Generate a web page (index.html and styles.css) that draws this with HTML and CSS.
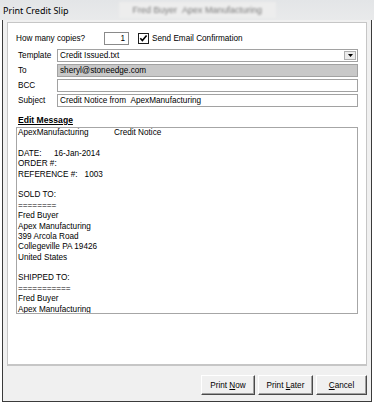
FILE: index.html
```html
<!DOCTYPE html>
<html>
<head>
<meta charset="utf-8">
<link rel="stylesheet" href="styles.css">
</head>
<body>
<div class="screen">
  <div class="titlebar">
    <span class="title">Print Credit Slip</span>
    <span class="ghost">Fred Buyer &nbsp;Apex Manufacturing</span>
  </div>
  <div class="frame">
    <div class="panel">
      <div class="row-copies">
        <span class="lbl-copies">How many copies?</span>
        <span class="num">1</span>
        <span class="chk"><svg width="11" height="11" viewBox="0 0 11 11"><rect x="0.5" y="0.5" width="10" height="10" fill="#fff" stroke="#1e1e1e"/><polyline points="2.3,5.2 4.4,7.6 8.6,2.6" fill="none" stroke="#000" stroke-width="1.6"/></svg></span>
        <span>Send Email Confirmation</span>
      </div>
      <div class="fields">
        <div class="frow"><span class="flabel">Template</span><div class="input select"><span>Credit Issued.txt</span><span class="arrow"><svg width="5" height="3" viewBox="0 0 5 3"><polygon points="0,0 5,0 2.5,3" fill="#000"/></svg></span></div></div>
        <div class="frow"><span class="flabel">To</span><div class="input grey"><span>sheryl@stoneedge.com</span></div></div>
        <div class="frow"><span class="flabel">BCC</span><div class="input"></div></div>
        <div class="frow"><span class="flabel">Subject</span><div class="input"><span>Credit Notice from &nbsp;ApexManufacturing</span></div></div>
      </div>
      <div class="edit-label">Edit Message</div>
      <div class="message">
        <div class="ln"><span class="c96">ApexManufacturing</span>Credit Notice</div>
        <div class="ln">&nbsp;</div>
        <div class="ln"><span class="c36">DATE:</span>16-Jan-2014</div>
        <div class="ln">ORDER #:</div>
        <div class="ln"><span class="cref">REFERENCE #:</span>1003</div>
        <div class="ln">&nbsp;</div>
        <div class="ln">SOLD TO:</div>
        <div class="ln">========</div>
        <div class="ln">Fred Buyer</div>
        <div class="ln">Apex Manufacturing</div>
        <div class="ln">399 Arcola Road</div>
        <div class="ln">Collegeville PA 19426</div>
        <div class="ln">United States</div>
        <div class="ln">&nbsp;</div>
        <div class="ln">SHIPPED TO:</div>
        <div class="ln">===========</div>
        <div class="ln">Fred Buyer</div>
        <div class="ln">Apex Manufacturing</div>
      </div>
    </div>
    <div class="buttons">
      <button class="btn w54">Print <u>N</u>ow</button>
      <button class="btn w55">Print <u>L</u>ater</button>
      <button class="btn w51"><u>C</u>ancel</button>
    </div>
  </div>
</div>
</body>
</html>
```
FILE: styles.css
```css
* { box-sizing: border-box; }
body {
  margin: 0;
  width: 374px;
  height: 404px;
  overflow: hidden;
  background: #ffffff;
  font-family: "Liberation Sans", Arial, sans-serif;
  font-size: 8.2px;
  color: #000;
}
.screen {
  height: 404px;
  display: flex;
  flex-direction: column;
}
.titlebar {
  height: 20px;
  flex: none;
  display: flex;
  align-items: center;
  padding-left: 3px;
  background: linear-gradient(#e3e5e7, #e9eaeb);
}
.title {
  font-family: "Noto Sans", sans-serif;
  font-size: 9px;
  color: #000;
}
.ghost {
  margin-left: 50px;
  padding: 3px 14px;
  font-size: 9px;
  color: #7a7a7a;
  background: #ededed;
  filter: blur(1.1px);
}
.frame {
  flex: 1;
  display: flex;
  flex-direction: column;
  margin: 0 2px 2px;
  border: 1px solid #3b3b3b;
  border-top: 0;
  background: #f0f0f0;
  padding: 2px 4px 0;
}
.panel {
  flex: 1;
  background: #fff;
  border: 1px solid #c6c6c6;
  border-bottom-width: 2px;
  padding: 0 8px;
}
.row-copies {
  display: flex;
  align-items: center;
  height: 13px;
  margin-top: 9px;
}
.lbl-copies { width: 88px; }
.num {
  width: 25px;
  height: 13px;
  border: 1px solid #8a8a8a;
  text-align: right;
  padding-right: 3px;
  line-height: 11px;
  background: #fff;
}
.chk {
  display: flex;
  width: 11px;
  height: 11px;
  margin-left: 9px;
  margin-right: 3px;
}
.fields {
  margin-top: 4px;
  display: flex;
  flex-direction: column;
  gap: 2px;
}
.frow {
  display: flex;
  align-items: center;
  height: 13px;
}
.flabel {
  width: 41px;
  padding-left: 2px;
}
.input {
  flex: 1;
  height: 13px;
  display: flex;
  align-items: center;
  border: 1px solid #a2a2a2;
  padding-left: 2px;
  line-height: 11px;
  background: #fff;
}
.input.grey { background: #c8c8c8; }
.select .arrow {
  margin-left: auto;
  width: 12px;
  height: 9px;
  margin-right: 1px;
  display: flex;
  align-items: center;
  justify-content: center;
  border: 1px solid #b0b0b0;
  background: #ececec;
}
.edit-label {
  margin-top: 6px;
  height: 14px;
  line-height: 14px;
  padding-left: 2px;
  font-size: 8.6px;
  font-weight: bold;
  text-decoration: underline;
}
.message {
  height: 187px;
  border: 1px solid #a6a6a6;
  padding-left: 1px;
  line-height: 10.4px;
  overflow: hidden;
}
.ln { white-space: pre; height: 10.4px; }
.c96 { display: inline-block; width: 96px; }
.c36 { display: inline-block; width: 36px; }
.cref { display: inline-block; padding-right: 7px; }
.buttons {
  height: 35px;
  flex: none;
  display: flex;
  justify-content: flex-end;
  align-items: flex-start;
  gap: 3px;
  padding-top: 9px;
}
.btn {
  height: 20px;
  padding: 0;
  font-family: "Liberation Sans", Arial, sans-serif;
  font-size: 8.2px;
  color: #000;
  background: #f0f0f0;
  border: 1px solid;
  border-color: #ffffff #4a4a4a #4a4a4a #ffffff;
  box-shadow: inset -1px -1px #a0a0a0;
}
.w54 { width: 54px; }
.w55 { width: 55px; }
.w51 { width: 51px; }
```
